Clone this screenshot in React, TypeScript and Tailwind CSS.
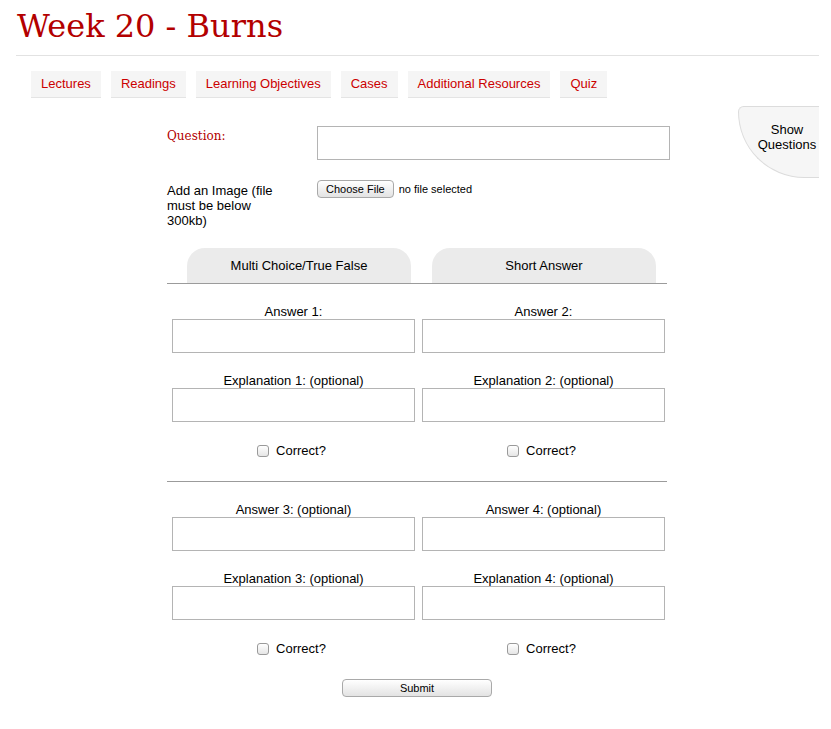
import React from 'react';

const navItems = ['Lectures', 'Readings', 'Learning Objectives', 'Cases', 'Additional Resources', 'Quiz'];

const Checkbox: React.FC = () => (
  <span className="inline-block w-[12px] h-[12px] rounded-[3px] border border-[#9a9a9a] bg-gradient-to-b from-white to-[#e6e6e6]"></span>
);

const Field: React.FC<{ label: string }> = ({ label }) => (
  <div className="flex flex-col items-center w-[243px] ml-[5px]">
    <div className="h-[15px] leading-[15px]">{label}</div>
    <div className="w-[243px] h-[34px] border border-[#b4b4b4] bg-white"></div>
  </div>
);

const AnswerBlock: React.FC<{ a: number; b: number; optional: boolean }> = ({ a, b, optional }) => (
  <div className="grid grid-cols-2 w-[500px]">
    {[a, b].map(n => (
      <div key={n} className="flex flex-col">
        <Field label={`Answer ${n}:${optional ? ' (optional)' : ''}`} />
        <div className="mt-[20px]">
          <Field label={`Explanation ${n}: (optional)`} />
        </div>
        <div className="flex items-center justify-center gap-[7px] w-[243px] ml-[3px] mt-[21px] h-[15px]">
          <Checkbox />
          <span>Correct?</span>
        </div>
      </div>
    ))}
  </div>
);

export default function App() {
  return (
    <div className="relative min-h-screen bg-white text-[13px] text-black" style={{ fontFamily: '"Liberation Sans", Arial, sans-serif' }}>
      {/* Header */}
      <div className="px-[16px] pt-[3px]">
        <h1 className="text-[#b30000] text-[32px] leading-[47px] pl-[1px]" style={{ fontFamily: '"DejaVu Serif", serif' }}>
          Week 20 - Burns
        </h1>
        <div className="mt-[5px] border-t border-[#e2e2e2] w-[803px]"></div>
      </div>

      {/* Nav */}
      <div className="flex gap-[10px] ml-[31px] mt-[15px]">
        {navItems.map(item => (
          <div key={item} className="h-[27px] px-[10px] flex items-center bg-[#f5f5f5] border-b border-[#e4e4e4] text-[#cc0000]">
            {item}
          </div>
        ))}
      </div>

      {/* Show questions tab */}
      <div className="absolute right-[12px] top-[106px] w-[81px] h-[72px] bg-[#f6f6f6] border border-[#dcdcdc] border-r-0 rounded-bl-[70px] rounded-tl-[6px] flex flex-col items-end pr-[1px] pt-[15px] leading-[15px] text-center">
        <div className="w-[62px] text-center">Show</div>
        <div className="w-[62px] text-center">Questions</div>
      </div>

      {/* Form */}
      <div className="ml-[167px] w-[500px] mt-[28px]">
        <div className="flex">
          <div className="w-[150px] shrink-0 pt-[1px] text-[#b30000] text-[12px]" style={{ fontFamily: '"DejaVu Serif", serif' }}>Question:</div>
          <div className="w-[353px] shrink-0 h-[34px] border border-[#b4b4b4]"></div>
        </div>

        <div className="flex mt-[20px]">
          <div className="w-[150px] shrink-0 leading-[15px] pt-[3px]">
            <div className="w-[115px]">Add an Image (file must be below 300kb)</div>
          </div>
          <div className="flex items-start gap-[5px]">
            <div className="h-[18px] px-[8px] flex items-center rounded-[4px] border border-[#a9a9a9] bg-gradient-to-b from-white to-[#e3e3e3] text-[11px]">Choose File</div>
            <span className="text-[11px] leading-[18px]">no file selected</span>
          </div>
        </div>

        {/* Type tabs */}
        <div className="flex gap-[21px] pl-[20px] mt-[20px] border-b border-[#9b9b9b]">
          <div className="w-[224px] h-[35px] bg-[#ebebeb] rounded-t-[18px] flex items-center justify-center">Multi Choice/True False</div>
          <div className="w-[224px] h-[35px] bg-[#ebebeb] rounded-t-[18px] flex items-center justify-center">Short Answer</div>
        </div>

        <div className="mt-[20px]">
          <AnswerBlock a={1} b={2} optional={false} />
        </div>

        <div className="mt-[23px] border-t border-[#9b9b9b] w-[500px]"></div>

        <div className="mt-[20px]">
          <AnswerBlock a={3} b={4} optional={true} />
        </div>

        <div className="flex justify-center mt-[23px] pb-[30px]">
          <div className="w-[150px] h-[18px] flex items-center justify-center rounded-[4px] border border-[#a9a9a9] bg-gradient-to-b from-white to-[#e3e3e3] text-[11px]">Submit</div>
        </div>
      </div>
    </div>
  );
}
